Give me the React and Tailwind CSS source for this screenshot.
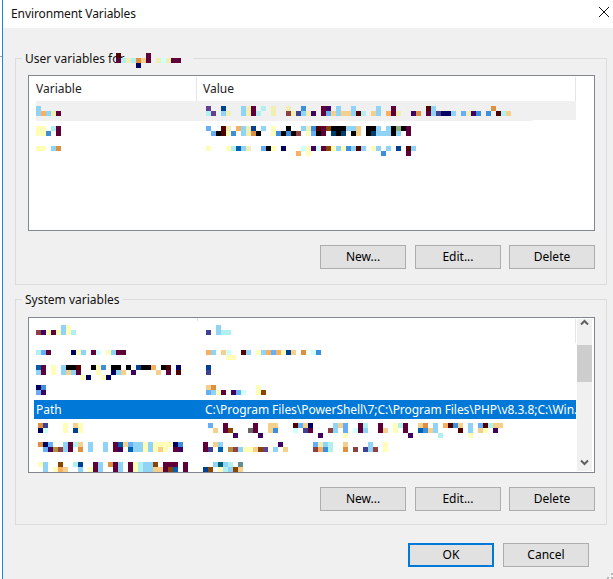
const PAL = {
  a: "#8fd3f7", b: "#3d8fdc", c: "#66aef5", y: "#fffdb8", e: "#f0eeb0", t: "#b0f0f0", u: "#d0ffff",
  o: "#f8b060", g: "#dc9040", p: "#f5d08c", m: "#600038", r: "#500000", v: "#400060", n: "#000060",
  d: "#004090", k: "#000000", h: "#60408f", i: "#404090", q: "#904040", s: "#0060b0", z: "#884400",
  f: "#004070", l: "#90b080", B: "#b09040", G: "#666666", T: "#006070", S: "#609090",
};

function Mosaic({ lines, origin = 34, width = 542, height = 20 }) {
  const rects = [];
  lines.forEach(([x, y, spec], i) => {
    spec.split(" ").forEach((tok, j) => {
      const k = parseInt(tok, 10);
      const col = PAL[tok[tok.length - 1]];
      rects.push(<rect key={i + "-" + j} x={x + 5 * k - origin} y={y} width="5" height="5" fill={col} />);
    });
  });
  return (
    <svg className="block shrink-0" width={width} height={height} shapeRendering="crispEdges">
      {rects}
    </svg>
  );
}

const USER_ROWS = [
  [
    [36, 5, "0a"],
    [36, 10, "0a 1o 2a 3e 4m"],
    [206, 5, "0h 3d 7a 8e 9m 11t 13e 16e 19b 23m 24v 26a 29a 34a 37m 44r 45a 57g"],
    [206, 10, "0t 1h 3a 4e 7a 8e 9m 10t 13e 16q 17e 18i 19a 20e 21v 23m 24c 25p 26a 27p 28p 29a 30r 31t 33p 34a 36o 37m 38e 41v 42g 44m 45a 46i 47n 48n 49a 51c 52e 53v 54b 56b 58r 59t 60p"],
  ],
  [
    [36, 5, "0y 1y 3t 4m"],
    [36, 10, "0y 1y 2b 4m"],
    [206, 5, "0c 3r 4e 6o 7a 8e 9d 11a 13y 16k 19a 20e 21b 22r 23m 24z 25k 26k 27k 28a 29a 30p 32k 33k 34a 36a 37k 38l 39k 40m"],
    [206, 10, "1c 2k 3r 4y 5b 7a 8e 9g 10k 13y 14b 15k 16b 17k 18q 20y 21c 22k 23m 25f 26k 27f 29k 30p 32k 33f 34a 35a 36a 37k 38a 40m"],
  ],
  [
    [36, 5, "0y 1y 3a 4g"],
    [206, 5, "0y 4y 5t 6s 7a 8e 11c 12k 13y 15n 19u 20y 21v 22u 23m 24z 25y 26a 27y 28b 29a 30r 31a 33y 34a 36a 38d 40r 41a"],
    [206, 10, "18o 20y 35b 40m"],
  ],
];

const SYS_TOP = [
  [
    [36, 5, "5a 6y"],
    [36, 10, "0q 1v 2y 3m 4y 5a 6y 7t"],
    [206, 5, "2a"],
    [206, 10, "0i 2a 3t 4t"],
  ],
  [
    [36, 10, "0t 1c 2m 7n 8y 9a 11m 12u 14y 15a 16m 17m"],
    [206, 10, "0o 1a 3p 4u 7r 8a 10y 11a 12o 13c 14o 15y 16d 17p 19g 21u 22b"],
    [206, 15, "4y 5y"],
  ],
  [
    [36, 5, "0s 1m 3y 5a 6k 7k 8r 11k 12y 13b 15k 16k 18k 20d 21k 22k 23o 25k 26r 28n"],
    [36, 10, "0a 1m 3y 5a 6p 7a 8m 12y 15n 16a 17p 19v 24p 26m 28r"],
    [36, 15, "9y 10n 13y 14n"],
    [206, 5, "0d"],
    [206, 10, "0i"],
  ],
  [
    [36, 5, "0n 1b"],
    [36, 10, "0c 1v"],
    [206, 5, "0p 1g 10y"],
    [206, 10, "0c 1a 2y 3m 5v 6c 7u 10y 11z"],
  ],
];

const SYS_BOTTOM = [
  [
    [38, 4, "0g 1i 5y 7p 8y"],
    [38, 9, "0n 1u 5y 7d 8y"],
    [208, 4, "0c 3m 9m 12p 13p 17r 18c 19p 20n 25a 26p 27c 30m 31t 34m 37y 38t 39m 42p 43g 45a 47o 48r 49b 50p 52a 54c 55r 56t 57p 58p"],
    [208, 9, "1p 3m 4z 8G 9m 12p 13b 17u 19i 20m 24q 25a 27c 29u 30m 31a 34m 35p 37y 39m 42s 43b 44p 45a 50r 52a 54p 55y 57v"],
    [208, 14, "5v 10v 22v 27y 40v 46t 52y"],
  ],
  [
    [38, 3, "0g 1n 2c 5a 6m 7t 8p 10a 13a 15m 16s 17p 18c 19a 20a 21y 22a 23y 24y 25y 26y 27n 28b"],
    [38, 8, "1c 2v 3B 4q 5a 6m 8g 10a 13a 15m 16v 18s 19a 20a 21y 22a 23y 24p 25y 27m 28v"],
    [203, 3, "0m 2p 3a 15v 22c 23e 24a 25t 28p 33a 36y"],
    [203, 8, "0m 1i 3s 5B 6q 7a 8y 9y 10p 11z 12h 14a 16p 22q 23o 24b 25t 28g 30q 32i 33a 34q 36y"],
  ],
  [
    [38, 3, "0y 1a 4z 7t 8d 11m 12a 14g 15m 16a 18m 19y 20t 21a 22a 23z 25m 26m 27m 29m"],
    [38, 8, "1a 3y 4o 5p 8a 10y 11m 12a 15m 16a 18m 19y 20t 21a 22a 23p 24p 25m 26z 27s 29m"],
    [203, 3, "2a 3T 4a 5t 7S"],
    [203, 8, "0d 1z 3y 4t 5a 6z 7p"],
  ],
];

const FONT = "font-['Noto_Sans','Open_Sans',sans-serif]";

function Btn({ children, primary, className = "" }) {
  return (
    <div
      className={
        "flex w-[86px] h-[24px] items-center justify-center bg-[#e1e1e1] text-[12px] text-black " +
        (primary ? "border-2 border-[#0078d7] " : "border border-[#adadad] ") +
        className
      }
    >
      {children}
    </div>
  );
}

function ButtonRow() {
  return (
    <div className="flex mt-[14px] ml-[304px]">
      <Btn>New...</Btn>
      <Btn className="ml-[9px]">Edit...</Btn>
      <Btn className="ml-[8px]">Delete</Btn>
    </div>
  );
}

function Group({ legend, className, children }) {
  return (
    <div className={"relative ml-[12px] w-[592px] border border-[#dcdcdc] " + className}>
      <div className="absolute left-[6px] top-[-8px] bg-[#f0f0f0] px-[3px] text-[12px] leading-[16px] text-[#111] whitespace-nowrap">
        {legend}
      </div>
      {children}
    </div>
  );
}

function Scrollbar() {
  return (
    <div className="flex flex-col justify-between w-[15px] h-[152px] mt-[1px] mr-[2px] shrink-0 bg-[#f0f0f0]">
      <div className="flex h-[36px] flex-col">
        <div className="flex h-[17px] items-center justify-center">
          <svg width="9" height="7" fill="none" stroke="#606060" strokeWidth="2"><path d="M1 5.5 4.5 2 8 5.5" /></svg>
        </div>
        <div className="mt-[19px] h-[37px] shrink-0 bg-[#cdcdcd]" />
      </div>
      <div className="flex h-[17px] items-center justify-center">
        <svg width="9" height="7" fill="none" stroke="#606060" strokeWidth="2"><path d="M1 1.5 4.5 5 8 1.5" /></svg>
      </div>
    </div>
  );
}

export default function App() {
  return (
    <div className={"relative flex w-[613px] h-[579px] overflow-hidden bg-white " + FONT}>
      <div className="relative w-[2px] shrink-0 bg-white">
        <div className="absolute left-0 top-[56px] h-px w-[2px] bg-[#a0a0a0]" />
      </div>
      <div className="w-px shrink-0 bg-[#1a86e0]" />
      <div className="flex flex-1 flex-col">
        <div className="flex h-[28px] items-center justify-between bg-white pl-[8px] pr-[4px]">
          <span className="text-[12px] text-[#111] tracking-[-0.1px]">Environment Variables</span>
          <svg width="10" height="10" viewBox="0 0 10 10" stroke="#111" strokeWidth="1" className="mb-[4px]">
            <path d="M0 0 10 10M10 0 0 10" />
          </svg>
        </div>

        <div className="flex flex-1 flex-col bg-[#f0f0f0]">
          <Group legend={<span className="flex items-center">User variables for <span className="inline-block w-[66px]" /></span>} className="mt-[30px] h-[227px]">
            <div className="absolute left-[100px] top-[-6px]">
              <Mosaic
                origin={116}
                width={66}
                height={15}
                lines={[
                  [116, 0, "0r 6m"],
                  [116, 5, "0m 1t 2e 3t 4g 5p 6m 8e 9u 10e 11m 12m"],
                  [116, 10, "4n"],
                ]}
              />
            </div>
            <div className="ml-[12px] mt-[16px] flex h-[156px] w-[567px] border border-[#82878f] bg-white">
              <div className="w-[548px] overflow-hidden">
                <div className="flex h-[25px] text-[12px] text-[#222]">
                  <div className="flex w-[168px] mt-[1px] items-center pl-[7px] border-r border-[#e5e5e5]">Variable</div>
                  <div className="flex w-[379px] mt-[1px] items-center pl-[6px] border-r border-[#e5e5e5]">Value</div>
                </div>
                <div className="relative ml-[7px] w-[540px] h-[20px] bg-[#f0f0f0]">
                  <Mosaic lines={USER_ROWS[0]} origin={36} width={540} />
                  <div className="absolute right-0 bottom-0 h-px w-[43px] bg-white" />
                </div>
                <div className="ml-[5px] h-[20px]"><Mosaic lines={USER_ROWS[1]} /></div>
                <div className="ml-[5px] h-[20px]"><Mosaic lines={USER_ROWS[2]} /></div>
              </div>
            </div>
            <ButtonRow />
          </Group>

          <Group legend="System variables" className="mt-[14px] h-[226px]">
            <div className="ml-[12px] mt-[17px] flex h-[156px] w-[567px] border border-[#82878f] bg-white">
              <div className="relative w-[548px] overflow-hidden">
                <div className="absolute left-[168px] top-0 h-[3px] w-px bg-[#e5e5e5]" />
                <div className="absolute left-[546px] top-[1px] h-[24px] w-px bg-[#e5e5e5]" />
                <div className="h-[2px]" />
                {SYS_TOP.map((r, i) => (
                  <div key={i} className="ml-[5px] h-[20px]"><Mosaic lines={r} /></div>
                ))}
                <div className="ml-[5px] flex h-[19px] w-[542px] items-center bg-[#0078d7] text-[12px] text-white whitespace-nowrap">
                  <span className="w-[171px] pl-[2px] shrink-0">Path</span>
                  <span className="tracking-[-0.05px]">C:\Program Files\PowerShell\7;C:\Program Files\PHP\v8.3.8;C:\Win...</span>
                </div>
                {SYS_BOTTOM.map((r, i) => (
                  <div key={i} className="ml-[5px] h-[20px]"><Mosaic lines={r} /></div>
                ))}
              </div>
              <div className="w-[1px]" />
              <Scrollbar />
            </div>
            <ButtonRow />
          </Group>

          <div className="flex mt-[18px] ml-[405px]">
            <Btn primary>OK</Btn>
            <Btn className="ml-[9px]">Cancel</Btn>
          </div>
        </div>
      </div>
      <svg className="absolute right-0 bottom-0" width="6" height="6" fill="#b8b8b8" shapeRendering="crispEdges">
        <rect x="4" y="0" width="2" height="2" />
        <rect x="0" y="4" width="2" height="2" />
        <rect x="4" y="4" width="2" height="2" />
      </svg>
    </div>
  );
}
